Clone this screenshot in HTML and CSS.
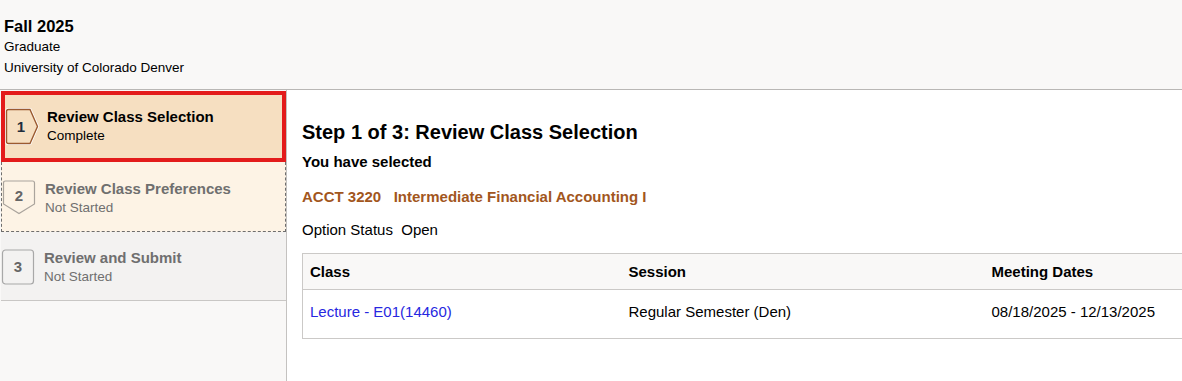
FILE: index.html
```html
<!DOCTYPE html>
<html lang="en">
<head>
<meta charset="utf-8">
<title>Review Class Selection</title>
<link rel="stylesheet" href="styles.css">
</head>
<body>
<header class="top">
  <div class="term">Fall 2025</div>
  <div class="sub">Graduate</div>
  <div class="sub">University of Colorado Denver</div>
</header>
<div class="layout">
  <nav class="sidebar">
    <div class="step step-current">
      <span class="badge">
        <svg width="34" height="37" viewBox="0 0 34 37"><path d="M3.5 1.5 H25 L32.5 18.5 L25 35.5 H3.5 Q1.5 35.5 1.5 33.5 V3.5 Q1.5 1.5 3.5 1.5 Z" fill="#f6dfc1" stroke="#ffffff" stroke-width="3"/><path d="M3.5 1.5 H25 L32.5 18.5 L25 35.5 H3.5 Q1.5 35.5 1.5 33.5 V3.5 Q1.5 1.5 3.5 1.5 Z" fill="#f6dfc1" stroke="#9b5a30" stroke-width="1.4"/></svg>
        <span class="num num-1">1</span>
      </span>
      <span class="labels">
        <span class="title">Review Class Selection</span>
        <span class="status">Complete</span>
      </span>
    </div>
    <div class="step step-next">
      <span class="badge badge-2">
        <svg width="34" height="35" viewBox="0 0 34 35"><path d="M3.5 1 H30.5 Q32.5 1 32.5 3 V24 L17 33.5 L1.5 24 V3 Q1.5 1 3.5 1 Z" fill="#fdf3e5" stroke="#aaa49d" stroke-width="1.2"/></svg>
        <span class="num num-2">2</span>
      </span>
      <span class="labels">
        <span class="title muted">Review Class Preferences</span>
        <span class="status muted">Not Started</span>
      </span>
    </div>
    <div class="step step-later">
      <span class="badge badge-3">
        <svg width="34" height="36" viewBox="0 0 34 36"><rect x="1.5" y="1" width="31" height="34" rx="3" fill="#f3f2f1" stroke="#a8a8a8" stroke-width="1.2"/></svg>
        <span class="num num-3">3</span>
      </span>
      <span class="labels">
        <span class="title muted">Review and Submit</span>
        <span class="status muted">Not Started</span>
      </span>
    </div>
  </nav>
  <main class="main">
    <h1 class="heading">Step 1 of 3: Review Class Selection</h1>
    <div class="selected">You have selected</div>
    <div class="course">ACCT 3220&nbsp;&nbsp;&nbsp;Intermediate Financial Accounting I</div>
    <div class="option">Option Status&nbsp;&nbsp;Open</div>
    <table class="grid">
      <colgroup>
        <col class="c1"><col class="c2"><col class="c3">
      </colgroup>
      <thead>
        <tr><th>Class</th><th>Session</th><th>Meeting Dates</th></tr>
      </thead>
      <tbody>
        <tr><td><a href="#" class="link">Lecture - E01(14460)</a></td><td>Regular Semester (Den)</td><td>08/18/2025 - 12/13/2025</td></tr>
      </tbody>
    </table>
  </main>
</div>
</body>
</html>
```

FILE: styles.css
```css
html, body {
  margin: 0;
  padding: 0;
}
body {
  font-family: "Liberation Sans", Arial, sans-serif;
  color: #000;
  background: #f9f8f7;
  width: 1182px;
  height: 381px;
  overflow: hidden;
}
.top {
  height: 90px;
  box-sizing: border-box;
  padding: 16px 0 0 4px;
  background: #f9f8f7;
  border-bottom: 1px solid #b9b7b5;
}
.term {
  font-size: 16.5px;
  font-weight: bold;
  line-height: 20px;
  margin-bottom: 1px;
}
.sub {
  font-size: 13.5px;
  line-height: 20.5px;
}
.layout {
  display: flex;
  height: 291px;
}
.sidebar {
  width: 286px;
  flex: none;
  border-right: 1px solid #c4c2c0;
  background: #f9f8f7;
  padding-top: 1px;
}
.step {
  display: flex;
  align-items: center;
  box-sizing: border-box;
  height: 70px;
  margin-left: 1px;
}
.step-current {
  background: #f6dfc1;
  border: 4px solid #e31b1b;
  height: 71px;
}
.step-next {
  background: #fdf3e5;
  border: 1px dashed #6e6e6e;
  border-top: none;
}
.step-later {
  background: #f3f2f1;
  border-bottom: 1px solid #c9c7c5;
  height: 69px;
}
.badge {
  position: relative;
  display: block;
  width: 34px;
  height: 37px;
  flex: none;
  margin-right: 9px;
}
.step-current .badge {
  margin-right: 8px;
}
.badge-2 {
  height: 35px;
  margin-top: 2px;
}
.badge-3 {
  height: 36px;
  margin-top: 1px;
}
.badge svg {
  display: block;
}
.num {
  position: absolute;
  left: 0;
  top: 0;
  width: 30px;
  text-align: center;
  font-size: 15px;
  font-weight: bold;
  line-height: 37px;
}
.num-1 { color: #1f2d3d; left: 1px; }
.num-2 { color: #666; line-height: 31px; width: 34px; }
.num-3 { color: #666; line-height: 36px; width: 34px; }
.labels {
  display: flex;
  flex-direction: column;
  margin-top: -1px;
}
.step-next .labels { margin-top: 3px; }
.step-later .labels { margin-top: 1px; }
.title {
  font-size: 15px;
  font-weight: bold;
  line-height: 19px;
  color: #000;
}
.status {
  font-size: 13.5px;
  line-height: 19px;
  color: #000;
}
.muted {
  color: #6f6f6f;
}
.main {
  flex: 1;
  background: #fff;
  padding: 0 0 0 15px;
  overflow: hidden;
  min-width: 0;
}
.heading {
  font-size: 20px;
  font-weight: bold;
  margin: 30px 0 0;
  line-height: 24px;
}
.selected {
  font-size: 15px;
  font-weight: bold;
  margin-top: 8px;
  line-height: 19px;
}
.course {
  font-size: 15px;
  font-weight: bold;
  color: #a2561d;
  margin-top: 16px;
  line-height: 19px;
}
.option {
  font-size: 15px;
  margin-top: 14px;
  line-height: 19px;
}
.grid {
  margin-top: 14px;
  border-collapse: collapse;
  table-layout: fixed;
  width: 960px;
  border: 1px solid #cbc9c7;
}
.c1 { width: 319px; }
.c2 { width: 363px; }
.c3 { width: 278px; }
.grid th {
  background: #f9f8f7;
  text-align: left;
  font-size: 15px;
  font-weight: bold;
  height: 35px;
  padding: 0 7px;
  border-bottom: 1px solid #cbc9c7;
}
.grid td {
  font-size: 15px;
  height: 42px;
  padding: 0 7px 6px;
  vertical-align: middle;
}
.link {
  color: #2727e0;
  text-decoration: none;
}
```
